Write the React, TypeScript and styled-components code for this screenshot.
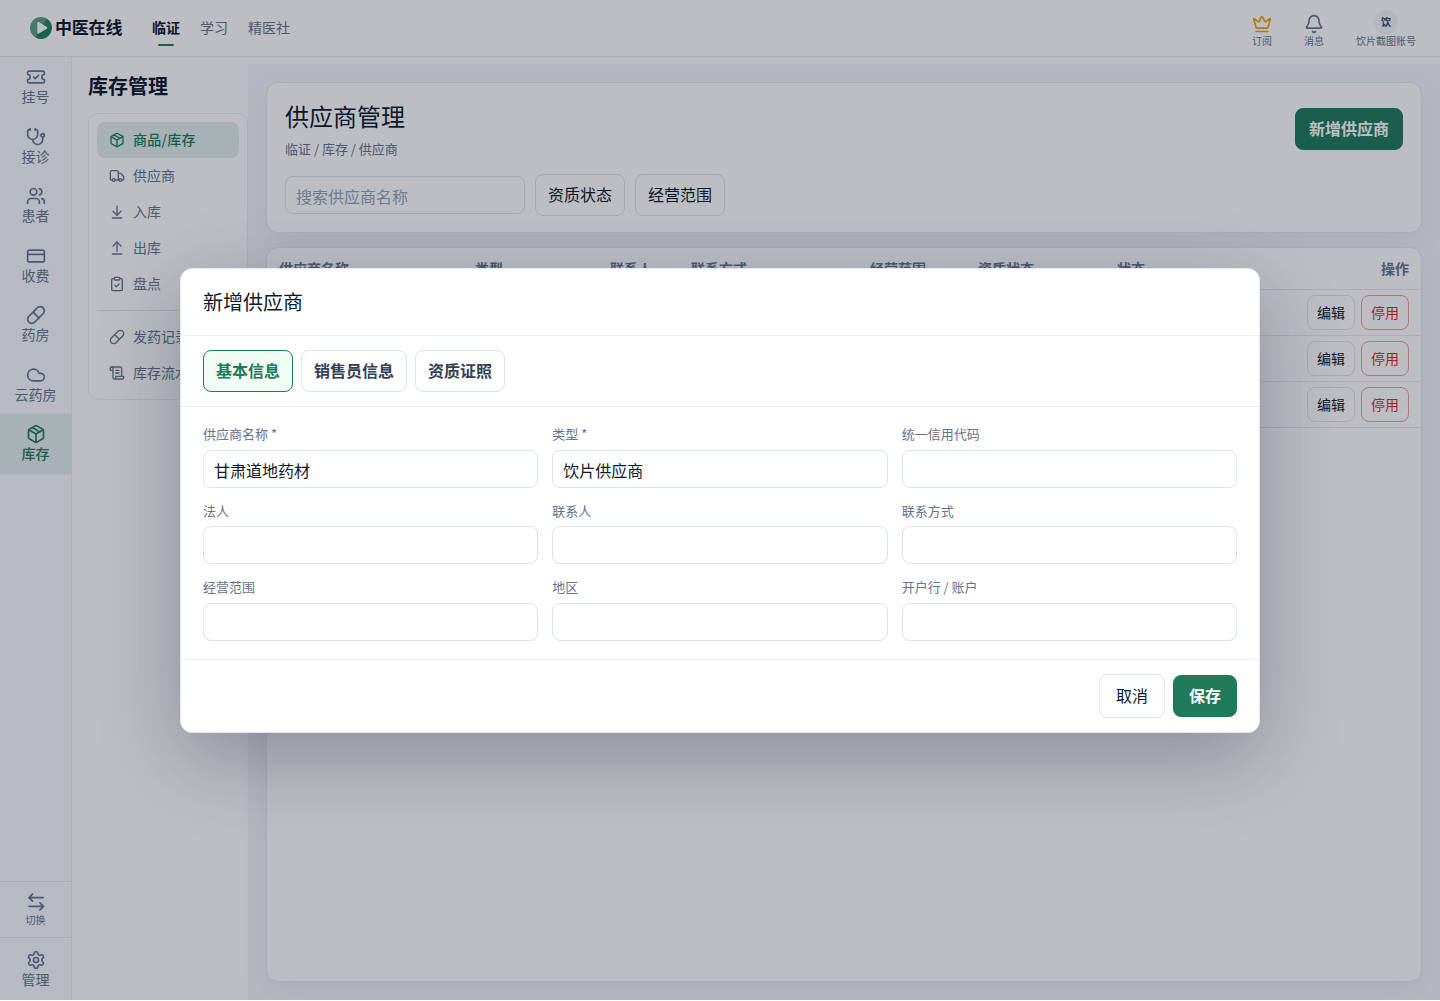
import React from 'react';
import styled, { createGlobalStyle } from 'styled-components';
import {
  TicketCheck, Stethoscope, Users, CreditCard, Pill, Cloud, Package,
  Settings, Crown, Bell, Truck, ArrowDownToLine, ArrowUpFromLine, ClipboardCheck, ScrollText,
} from 'lucide-react';

const GlobalStyle = createGlobalStyle`
  *, *::before, *::after { box-sizing: border-box; }
  html, body { margin: 0; background: #fff; }
  body, button, input {
    font-family: "Noto Sans CJK SC", "Noto Sans", sans-serif;
  }
  body { color: #0f172a; overflow: hidden; }
  button, input { margin: 0; }
`;

const Shell = styled.div`
  height: 1000px;
  display: flex;
  flex-direction: column;
  background: #fff;
`;

const TopBar = styled.header`
  height: 57px;
  flex: none;
  display: flex;
  align-items: center;
  justify-content: space-between;
  padding: 0 24px 0 30px;
  border-bottom: 1px solid #e2e8f0;
`;

const TopLeft = styled.div`
  display: flex;
  align-items: center;
`;

const Brand = styled.div`
  display: flex;
  align-items: center;
  gap: 3px;
  width: 122px;
  font-size: 17px;
  font-weight: 700;
  line-height: 24px;
  letter-spacing: -0.2px;
  white-space: nowrap;
  span { padding-bottom: 2px; }
`;

const TopNav = styled.nav`
  display: flex;
  gap: 20px;
  padding-bottom: 2px;
`;

const TopLink = styled.a<{ $active?: boolean }>`
  position: relative;
  font-size: 14px;
  line-height: 20px;
  font-weight: ${(p) => (p.$active ? 700 : 400)};
  color: ${(p) => (p.$active ? '#0f172a' : '#64748b')};
  &::after {
    content: '';
    display: ${(p) => (p.$active ? 'block' : 'none')};
    position: absolute;
    left: 6px;
    top: 27px;
    width: 16px;
    height: 2px;
    border-radius: 2px;
    background: #1f7a5a;
  }
`;

const TopRight = styled.div`
  display: flex;
  align-items: flex-start;
  padding-top: 2px;
`;

const TopAction = styled.div<{ $width: number; $color?: string }>`
  width: ${(p) => p.$width}px;
  display: flex;
  flex-direction: column;
  align-items: center;
  font-size: 10px;
  line-height: 14px;
  color: #64748b;
  white-space: nowrap;
  svg { color: ${(p) => p.$color ?? 'inherit'}; margin: 4px 0 0; }
`;

const Account = styled(TopAction)`
  margin-left: 16px;
`;

const Avatar = styled.span`
  width: 24px;
  height: 24px;
  border-radius: 50%;
  display: grid;
  place-items: center;
  background: #f1f5f9;
  color: #334155;
  font-size: 10px;
  font-weight: 700;
`;

const Body = styled.div`
  flex: 1;
  min-height: 0;
  display: flex;
`;

const Rail = styled.aside`
  width: 72px;
  flex: none;
  display: flex;
  flex-direction: column;
  background: #f8fafd;
  border-right: 1px solid #e2e8f0;
`;

const RailItem = styled.a<{ $active?: boolean }>`
  height: 59.5px;
  display: flex;
  flex-direction: column;
  align-items: center;
  padding-top: 10px;
  font-size: 14px;
  line-height: 18px;
  font-weight: ${(p) => (p.$active ? 500 : 400)};
  color: ${(p) => (p.$active ? '#1f7a5a' : '#64748b')};
  background: ${(p) => (p.$active ? '#e3efec' : 'transparent')};
`;

const RailFoot = styled.div<{ $height: number; $size: number }>`
  height: ${(p) => p.$height}px;
  border-top: 1px solid #e2e8f0;
  display: flex;
  flex-direction: column;
  align-items: center;
  padding-top: ${(p) => (p.$size === 10 ? 10 : 12)}px;
  font-size: ${(p) => p.$size}px;
  line-height: ${(p) => (p.$size === 10 ? 16 : 18)}px;
  color: #64748b;
`;

const Spacer = styled.div`
  flex: 1;
`;

const SidePanel = styled.aside`
  width: 176px;
  flex: none;
  padding: 16px 0 0 16px;
`;

const SideTitle = styled.h2`
  margin: 0 0 14px;
  font-size: 20px;
  line-height: 26px;
  font-weight: 700;
`;

const SideMenu = styled.nav`
  border: 1px solid #e8edf3;
  border-radius: 10px;
  padding: 8px;
`;

const SideItem = styled.a<{ $active?: boolean }>`
  height: 36px;
  display: flex;
  align-items: center;
  gap: 8px;
  padding: 0 12px;
  border-radius: 8px;
  font-size: 14px;
  white-space: nowrap;
  font-weight: ${(p) => (p.$active ? 500 : 400)};
  letter-spacing: ${(p) => (p.$active ? '0.25px' : 'normal')};
  color: ${(p) => (p.$active ? '#1f7a5a' : '#64748b')};
  background: ${(p) => (p.$active ? '#e3efec' : 'transparent')};
  span { padding-bottom: 2px; }
`;

const SideRule = styled.div`
  height: 1px;
  margin: 8px 0;
  background: #e2e8f0;
`;

const Main = styled.main`
  flex: 1;
  margin-top: 7px;
  padding: 18px 18px 18px;
  display: flex;
  flex-direction: column;
  gap: 14px;
  background: #f5f7fc;
`;

const Card = styled.section`
  background: #fff;
  border: 1px solid #e2e8f0;
  border-radius: 12px;
  box-shadow: 0 10px 30px rgba(15, 23, 42, 0.06);
`;

const HeadCard = styled(Card)`
  height: 151px;
  padding: 18px;
`;

const HeadRow = styled.div`
  display: flex;
  justify-content: space-between;
  align-items: center;
  height: 56px;
`;

const PageTitle = styled.h1`
  margin: 0;
  font-size: 24px;
  line-height: 31px;
  font-weight: 400;
`;

const Crumbs = styled.div`
  margin-top: 8px;
  font-size: 13px;
  line-height: 19px;
  color: #64748b;
`;

const Filters = styled.div`
  display: flex;
  align-items: center;
  gap: 10px;
  margin-top: 17px;
`;

const Input = styled.input`
  display: block;
  width: 100%;
  height: 38px;
  padding: 2px 10px 0;
  border: 1px solid #dbe3ee;
  border-radius: 8px;
  background: #fff;
  color: #0f172a;
  font-size: 16px;
  outline: none;
  &::placeholder { color: #94a3b8; }
`;

const SearchInput = styled(Input)`
  width: 240px;
`;

type Tone = 'plain' | 'primary' | 'danger' | 'tab' | 'selected';
const tones: Record<Tone, [string, string, string, number]> = {
  plain: ['#fff', '#dbe3ee', '#0f172a', 400],
  primary: ['#1f7a5a', '#1f7a5a', '#fff', 700],
  danger: ['#fff', '#f19a9a', '#dc2626', 400],
  tab: ['#fff', '#dbe3ee', '#334155', 700],
  selected: ['#f0fdf4', '#1f7a5a', '#1f7a5a', 700],
};

const Button = styled.button<{ $tone?: Tone; $w: number; $h?: number; $size?: number }>`
  width: ${(p) => p.$w}px;
  height: ${(p) => p.$h ?? 42}px;
  flex: none;
  padding: 0 0 2px;
  border-radius: 8px;
  font-size: ${(p) => p.$size ?? 16}px;
  background: ${(p) => tones[p.$tone ?? 'plain'][0]};
  border: 1px solid ${(p) => tones[p.$tone ?? 'plain'][1]};
  color: ${(p) => tones[p.$tone ?? 'plain'][2]};
  font-weight: ${(p) => tones[p.$tone ?? 'plain'][3]};
`;

const TableCard = styled(Card)`
  flex: 1;
  overflow: hidden;
`;

const TableRow = styled.div<{ $head?: boolean }>`
  display: grid;
  grid-template-columns: 196px 135px 81px 179px 108px 139px 1fr auto;
  align-items: center;
  height: ${(p) => (p.$head ? 42 : 46)}px;
  padding: 0 12px;
  border-bottom: 1px solid #e2e8f0;
  font-size: 14px;
  font-weight: ${(p) => (p.$head ? 700 : 400)};
  color: ${(p) => (p.$head ? '#64748b' : '#0f172a')};
  & > span { padding-bottom: 2px; }
`;

const RowActions = styled.div`
  grid-column: 8;
  display: flex;
  gap: 6px;
`;

const Overlay = styled.div`
  position: absolute;
  top: 0;
  left: 0;
  width: 100%;
  height: 1000px;
  overflow: hidden;
  display: flex;
  align-items: center;
  justify-content: center;
  background: rgba(15, 23, 42, 0.28);
`;

const Dialog = styled.div`
  width: 1080px;
  background: #fff;
  border: 1px solid #e2e8f0;
  border-radius: 12px;
  box-shadow: 0 24px 80px rgba(15, 23, 42, 0.28);
`;

const DialogHead = styled.div`
  height: 67.5px;
  padding: 0 22px 1px;
  display: flex;
  align-items: center;
  border-bottom: 1px solid #eef2f6;
  font-size: 20px;
`;

const Tabs = styled.div`
  display: flex;
  gap: 8px;
  padding: 14px 22px;
  border-bottom: 1px solid #eef2f6;
`;

const Form = styled.div`
  display: grid;
  grid-template-columns: repeat(3, 1fr);
  gap: 14px;
  padding: 18px 22px;
`;

const Field = styled.label`
  display: block;
  font-size: 13px;
  color: #64748b;
`;

const FieldLabel = styled.span`
  display: block;
  line-height: 18.5px;
  margin-bottom: 6px;
`;

const DialogFoot = styled.div`
  display: flex;
  justify-content: flex-end;
  align-items: center;
  gap: 8px;
  padding: 14px 22px;
  border-top: 1px solid #eef2f6;
`;

const rail = [
  { label: '挂号', Icon: TicketCheck },
  { label: '接诊', Icon: Stethoscope },
  { label: '患者', Icon: Users },
  { label: '收费', Icon: CreditCard },
  { label: '药房', Icon: Pill },
  { label: '云药房', Icon: Cloud },
  { label: '库存', Icon: Package },
];

const stockMenu = [
  { label: '商品/库存', Icon: Package },
  { label: '供应商', Icon: Truck },
  { label: '入库', Icon: ArrowDownToLine },
  { label: '出库', Icon: ArrowUpFromLine },
  { label: '盘点', Icon: ClipboardCheck },
];

const recordMenu = [
  { label: '发药记录', Icon: Pill },
  { label: '库存流水', Icon: ScrollText },
];

const columns = ['供应商名称', '类型', '联系人', '联系方式', '经营范围', '资质状态', '状态', '操作'];

const fields = [
  { label: '供应商名称 *', value: '甘肃道地药材' },
  { label: '类型 *', value: '饮片供应商' },
  { label: '统一信用代码', value: '' },
  { label: '法人', value: '' },
  { label: '联系人', value: '' },
  { label: '联系方式', value: '' },
  { label: '经营范围', value: '' },
  { label: '地区', value: '' },
  { label: '开户行 / 账户', value: '' },
];

const Logo = () => (
  <svg width="22" height="22" viewBox="0 0 22 22">
    <circle cx="11" cy="11" r="11" fill="#5fa07d" />
    <path d="M17 2a11 11 0 0 1-9.5 19.4C6 19 6.500 17 7.500 16L18 11Z" fill="#1d7e58" />
    <path d="M17 2c4 3 5 7 4.800 10L12 8Z" fill="#288362" />
    <path d="M7.300 5.900c0-.8.8-1.200 1.500-.8l8 5c.7.400.7 1.300 0 1.700l-8 4.800c-.7.400-1.500 0-1.500-.8Z" fill="#fff" />
    <circle cx="12.500" cy="4.500" r="0.700" fill="#d99a32" />
  </svg>
);

const SwapIcon = () => (
  <svg width="20" height="20" viewBox="0 0 20 20" fill="none" stroke="currentColor" strokeWidth="1.700" strokeLinecap="round" strokeLinejoin="round">
    <path d="M17 5.700H3M6.500 2.200 3 5.700l3.500 3.500M3 14.300h14.500M14 10.800l3.500 3.500-3.500 3.500" />
  </svg>
);

export default function App() {
  return (
    <>
      <GlobalStyle />
      <Shell>
        <TopBar>
          <TopLeft>
            <Brand><Logo /><span>中医在线</span></Brand>
            <TopNav>
              <TopLink $active>临证</TopLink>
              <TopLink>学习</TopLink>
              <TopLink>精医社</TopLink>
            </TopNav>
          </TopLeft>
          <TopRight>
            <TopAction $width={52} $color="#f59e0b"><Crown size={20} />订阅</TopAction>
            <TopAction $width={52}><Bell size={20} />消息</TopAction>
            <Account $width={60}><Avatar>饮</Avatar>饮片截图账号</Account>
          </TopRight>
        </TopBar>
        <Body>
          <Rail>
            {rail.map(({ label, Icon }) => (
              <RailItem key={label} $active={label === '库存'}>
                <Icon size={20} />
                {label}
              </RailItem>
            ))}
            <Spacer />
            <RailFoot $height={56} $size={10}><SwapIcon />切换</RailFoot>
            <RailFoot $height={63} $size={14}><Settings size={20} />管理</RailFoot>
          </Rail>
          <SidePanel>
            <SideTitle>库存管理</SideTitle>
            <SideMenu>
              {stockMenu.map(({ label, Icon }, i) => (
                <SideItem key={label} $active={i === 0}><Icon size={16} /><span>{label}</span></SideItem>
              ))}
              <SideRule />
              {recordMenu.map(({ label, Icon }) => (
                <SideItem key={label}><Icon size={16} /><span>{label}</span></SideItem>
              ))}
            </SideMenu>
          </SidePanel>
          <Main>
            <HeadCard>
              <HeadRow>
                <div>
                  <PageTitle>供应商管理</PageTitle>
                  <Crumbs>临证 / 库存 / 供应商</Crumbs>
                </div>
                <Button $tone="primary" $w={108}>新增供应商</Button>
              </HeadRow>
              <Filters>
                <SearchInput placeholder="搜索供应商名称" />
                <Button $w={90}>资质状态</Button>
                <Button $w={90}>经营范围</Button>
              </Filters>
            </HeadCard>
            <TableCard>
              <TableRow $head>
                {columns.map((c) => <span key={c}>{c}</span>)}
              </TableRow>
              {[1, 2, 3].map((id) => (
                <TableRow key={id}>
                  <RowActions>
                    <Button $w={48} $h={35} $size={14}>编辑</Button>
                    <Button $tone="danger" $w={48} $h={35} $size={14}>停用</Button>
                  </RowActions>
                </TableRow>
              ))}
            </TableCard>
          </Main>
        </Body>
      </Shell>
      <Overlay>
        <Dialog role="dialog">
          <DialogHead>新增供应商</DialogHead>
          <Tabs>
            <Button $tone="selected" $w={90}>基本信息</Button>
            <Button $tone="tab" $w={106}>销售员信息</Button>
            <Button $tone="tab" $w={90}>资质证照</Button>
          </Tabs>
          <Form>
            {fields.map((f) => (
              <Field key={f.label}>
                <FieldLabel>{f.label}</FieldLabel>
                <Input defaultValue={f.value} />
              </Field>
            ))}
          </Form>
          <DialogFoot>
            <Button $w={66} $h={44}>取消</Button>
            <Button $tone="primary" $w={64}>保存</Button>
          </DialogFoot>
        </Dialog>
      </Overlay>
    </>
  );
}
